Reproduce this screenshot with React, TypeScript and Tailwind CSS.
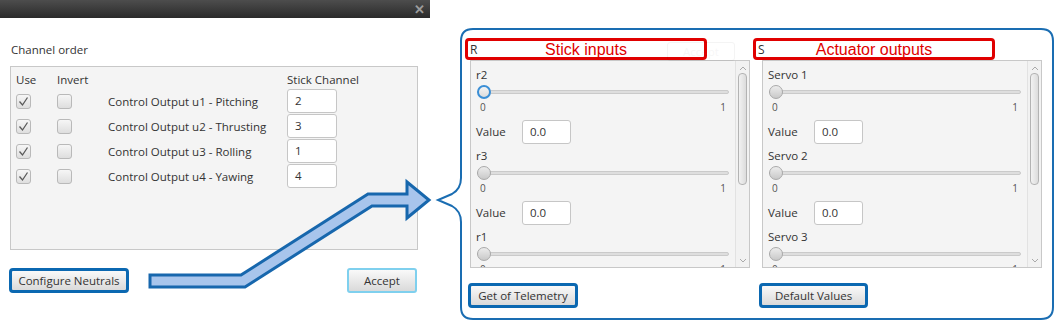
const rows = [
  { label: 'Control Output u1 - Pitching', ch: '2' },
  { label: 'Control Output u2 - Thrusting', ch: '3' },
  { label: 'Control Output u3 - Rolling', ch: '1' },
  { label: 'Control Output u4 - Yawing', ch: '4' },
];

function CheckBox({ checked }: { checked?: boolean }) {
  return (
    <div className="w-[15px] h-[15px] rounded-[3px] border border-[#b9b9b9] bg-[linear-gradient(#f6f6f6,#dedede)] flex items-center justify-center">
      {checked && (
        <svg width="11" height="11" viewBox="0 0 11 11">
          <polyline points="1.5,5.5 4.5,9 9.5,1.5" fill="none" stroke="#5a5a5a" strokeWidth="1.3" />
        </svg>
      )}
    </div>
  );
}

function Field({ value, className }: { value: string; className?: string }) {
  return (
    <div
      className={`h-[24px] bg-white border border-[#c6c6c6] rounded-[3px] flex items-center pl-[7px] ${className ?? ''}`}
    >
      {value}
    </div>
  );
}

function Btn({ label, focus, w }: { label: string; focus?: 'strong' | 'soft'; w: string }) {
  const ring =
    focus === 'strong'
      ? 'border-[3px] border-[#0b68b1] rounded-[4px]'
      : 'border-[2px] border-[#7fd0ee] rounded-[3px]';
  return (
    <div className={`h-[25px] ${w} ${ring} bg-[linear-gradient(#f9f9f9,#dadada)] flex items-center justify-center text-[#333]`}>
      {label}
    </div>
  );
}

function Slider({ focused }: { focused?: boolean }) {
  return (
    <div className="flex flex-col">
      <div className="h-[14px] ml-[1px] w-[252px] flex items-center relative">
        <div className="w-full h-[4px] rounded-full bg-[#dedede] border border-[#cacaca]" />
        {/* thumb */}
        <div
          className={`absolute left-0 top-0 w-[14px] h-[14px] rounded-full ${
            focused
              ? 'border-[2px] border-[#3b8fd6] bg-[linear-gradient(#f4f4f4,#dcdcdc)]'
              : 'border border-[#a9a9a9] bg-[linear-gradient(#ececec,#c9c9c9)]'
          }`}
        />
      </div>
      <div className="mt-[2px] h-[12px] flex justify-between text-[10px] leading-[12px] text-[#555] pl-[4px] pr-[3px] w-[253px]">
        <span>0</span>
        <span>1</span>
      </div>
    </div>
  );
}

function Group({ name, focused, last }: { name: string; focused?: boolean; last?: boolean }) {
  return (
    <div className="flex flex-col">
      <div className="h-[16px] leading-[16px]">{name}</div>
      <div className="mt-[2px]">
        <Slider focused={focused} />
      </div>
      {!last && (
        <div className="mt-[7px] flex items-center h-[24px]">
          <span className="w-[46px]">Value</span>
          <Field value="0.0" className="w-[49px]" />
        </div>
      )}
    </div>
  );
}

function ScrollPane({ names, focusFirst, ml }: { names: string[]; focusFirst?: boolean; ml: string }) {
  return (
    <div className={`${ml} w-[280px] h-[208px] border border-[#c8c8c8] bg-[#f4f4f4] flex overflow-hidden`}>
      <div className="flex-1 pl-[5px] pt-[6px] flex flex-col gap-[4px] overflow-hidden">
        {names.map((n, i) => (
          <Group key={n} name={n} focused={focusFirst && i === 0} last={i === names.length - 1} />
        ))}
      </div>
      <div className="w-[14px] border-l border-[#e2e2e2] bg-[#f2f2f2] flex flex-col items-center">
        <svg width="10" height="8" viewBox="0 0 10 8" className="mt-[3px]">
          <polyline points="2,6 5,3 8,6" fill="none" stroke="#aaa" strokeWidth="1" />
        </svg>
        <div className="mt-[1px] w-[9px] h-[112px] rounded-[4px] border border-[#b3b3b3] bg-[linear-gradient(90deg,#f2f2f2,#dcdcdc)]" />
        <div className="flex-1" />
        <svg width="10" height="8" viewBox="0 0 10 8" className="mb-[2px]">
          <polyline points="2,2 5,5 8,2" fill="none" stroke="#aaa" strokeWidth="1" />
        </svg>
      </div>
    </div>
  );
}

function RedField({ letter, title }: { letter: string; title: string }) {
  return (
    <div className="w-[242px] h-[22px] border-[3px] border-[#e00000] rounded-[4px] bg-white grid items-center">
      <span className="col-start-1 row-start-1 justify-self-start pl-[2px] text-[12px] text-[#333]">{letter}</span>
      <span className="col-start-1 row-start-1 justify-self-center font-['Liberation_Sans',Arial,sans-serif] text-[16px] leading-[16px] text-[#e00000]">
        {title}
      </span>
    </div>
  );
}

export default function App() {
  return (
    <div className="w-[1055px] h-[321px] bg-white relative overflow-hidden flex font-['Open_Sans',sans-serif] text-[11.5px] text-[#333]">
      {/* Left dialog */}
      <div className="w-[430px] flex flex-col">
        <div className="h-[18px] bg-[linear-gradient(#4d4d4d,#2a2a2a)] flex items-center justify-end pr-[5px]">
          <span className="text-[#9c9c9c] text-[13px] font-bold leading-none">✕</span>
        </div>
        <div className="pl-[10px] flex flex-col">
          <div className="mt-[24px] h-[16px] leading-[16px] pl-[1px]">Channel order</div>
          <div className="mt-[8px] w-[408px] h-[184px] border border-[#c8c8c8] bg-[#f4f4f4] pt-[5px] pl-[5px]">
            <div className="grid grid-cols-[41px_51px_179px_50px] items-center">
              <div className="h-[16px] leading-[16px] mb-[1px]">Use</div>
              <div className="h-[16px] leading-[16px] mb-[1px]">Invert</div>
              <div />
              <div className="h-[16px] leading-[16px] mb-[1px] whitespace-nowrap">Stick Channel</div>
              {rows.map((r) => (
                <div key={r.label} className="contents">
                  <div className="h-[25px] flex items-center">
                    <CheckBox checked />
                  </div>
                  <div className="h-[25px] flex items-center">
                    <CheckBox />
                  </div>
                  <div className="h-[25px] flex items-center whitespace-nowrap">{r.label}</div>
                  <div className="h-[25px] flex items-start">
                    <Field value={r.ch} className="w-[50px]" />
                  </div>
                </div>
              ))}
            </div>
          </div>
          <div className="mt-[18px] flex justify-between w-[408px] -ml-[1px]">
            <Btn label="Configure Neutrals" focus="strong" w="w-[120px]" />
            <Btn label="Accept" focus="soft" w="w-[70px]" />
          </div>
        </div>
      </div>

      {/* Right callout */}
      <div className="flex-1 relative">
        <svg className="absolute inset-0" width="625" height="321" viewBox="0 0 625 321">
          <path
            d="M43 29 H611 Q623 29 623 41 V307 Q623 319 611 319 H43 Q31 319 31 307 V222 Q31 211 22 206 L8 200 L22 194 Q31 189 31 178 V41 Q31 29 43 29 Z"
            fill="white"
            stroke="#1a6db2"
            strokeWidth="2"
          />
        </svg>
        <div className="relative pl-[35px] pt-[38px] flex gap-[3px]">
          <div className="w-[285px] flex flex-col">
            <RedField letter="R" title="Stick inputs" />
            <ScrollPane names={['r2', 'r3', 'r1']} focusFirst ml="ml-[5px]" />
            <div className="mt-[15px] ml-[3px]">
              <Btn label="Get of Telemetry" focus="strong" w="w-[110px]" />
            </div>
          </div>
          <div className="flex flex-col">
            <RedField letter="S" title="Actuator outputs" />
            <ScrollPane names={['Servo 1', 'Servo 2', 'Servo 3']} ml="ml-[9px]" />
            <div className="mt-[15px] ml-[6px]">
              <Btn label="Default Values" focus="strong" w="w-[109px]" />
            </div>
          </div>
        </div>
        {/* faint ghost of underlying dialog */}
        <div className="absolute left-[237px] top-[42px] w-[68px] h-[19px] border border-[#000] rounded-[3px] opacity-[0.04] flex items-center justify-center pointer-events-none">
          Accept
        </div>
      </div>

      {/* Arrow */}
      <svg className="absolute left-0 top-0 pointer-events-none" width="1055" height="321" viewBox="0 0 1055 321">
        <polygon
          points="150,275 241,275 368,194 407,194 407,182 429,200 407,218 407,206 372,206 245,287 150,287"
          fill="#a8c5ec"
          stroke="#1767ad"
          strokeWidth="3"
          strokeLinejoin="miter"
        />
      </svg>
    </div>
  );
}
